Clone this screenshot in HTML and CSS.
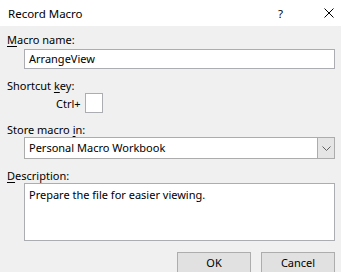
FILE: index.html
```html
<!DOCTYPE html>
<html lang="en">
<head>
    <meta charset="UTF-8">
    <meta name="viewport" content="width=device-width, initial-scale=1.0">
    <title>Record Macro</title>
    <link rel="stylesheet" href="styles.css">
</head>
<body>

<div class="titlebar">
    <span class="title">Record Macro</span>
    <span class="help">?</span>
    <span class="close">
        <svg width="10" height="10" viewBox="0 0 10 10">
            <path d="M0.5 0.5 L9.5 9.5 M9.5 0.5 L0.5 9.5" stroke="#000" stroke-width="1" fill="none"/>
        </svg>
    </span>
</div>

<div class="dialog">
    <label class="field-label first"><u>M</u>acro name:</label>
    <div class="textbox">ArrangeView</div>

    <label class="field-label">Shortcut <u>k</u>ey:</label>
    <div class="shortcut-row">
        <span class="ctrl">Ctrl+</span>
        <span class="keybox"></span>
    </div>

    <label class="field-label">Store macro <u>i</u>n:</label>
    <div class="combo">
        <span class="combo-text">Personal Macro Workbook</span>
        <span class="combo-btn">
            <svg width="9" height="5" viewBox="0 0 9 5">
                <path d="M0.5 0.5 L4.5 4.5 L8.5 0.5" stroke="#606060" stroke-width="1" fill="none"/>
            </svg>
        </span>
    </div>

    <label class="field-label"><u>D</u>escription:</label>
    <div class="textarea">Prepare the file for easier viewing.</div>

    <div class="buttons">
        <button class="btn">OK</button>
        <button class="btn">Cancel</button>
    </div>
</div>

</body>
</html>
```

FILE: styles.css
```css
body {
    font-family: "Segoe UI", "Noto Sans", sans-serif;
    font-size: 11px;
    color: #000;
    background-color: #f0f0f0;
    margin: 0;
    padding: 0;
}
.titlebar {
    background-color: #fff;
    height: 26px;
    display: flex;
    align-items: center;
    padding: 0 7px 0 8px;
    font-size: 11.5px;
}
.title {
    flex: 1;
}
.help {
    width: 46px;
    text-align: left;
}
.close {
    width: 10px;
    display: flex;
}
.dialog {
    padding: 6px 6px 0 7px;
}
.field-label {
    display: block;
    line-height: 15px;
    height: 15px;
    margin-top: 9px;
}
.field-label.first {
    margin-top: 0;
}
.field-label u {
    text-decoration-thickness: 1px;
    text-underline-offset: 2px;
}
.textbox,
.combo,
.textarea {
    margin-left: 17px;
    background: #fff;
    border: 1px solid #abadb3;
    box-sizing: border-box;
}
.textbox {
    margin-top: 2px;
    height: 20px;
    line-height: 18px;
    padding-left: 4px;
}
.shortcut-row {
    display: flex;
    align-items: center;
    height: 20px;
    padding-left: 49px;
}
.ctrl {
    margin-right: 4px;
}
.keybox {
    width: 18px;
    height: 20px;
    background: #fff;
    border: 1px solid #abadb3;
    box-sizing: border-box;
}
.combo {
    height: 22px;
    display: flex;
    border-color: #acacac;
}
.combo-text {
    flex: 1;
    line-height: 20px;
    padding-left: 4px;
}
.combo-btn {
    width: 16px;
    background: #e5e5e5;
    border-left: 1px solid #acacac;
    display: flex;
    align-items: center;
    justify-content: center;
}
.textarea {
    height: 58px;
    padding: 3px 4px;
}
.buttons {
    display: flex;
    justify-content: flex-end;
    gap: 10px;
    margin-top: 11px;
}
.btn {
    font: inherit;
    width: 74px;
    height: 22px;
    background: #e1e1e1;
    border: 1px solid #adadad;
    padding: 0 0 1px;
}
```
